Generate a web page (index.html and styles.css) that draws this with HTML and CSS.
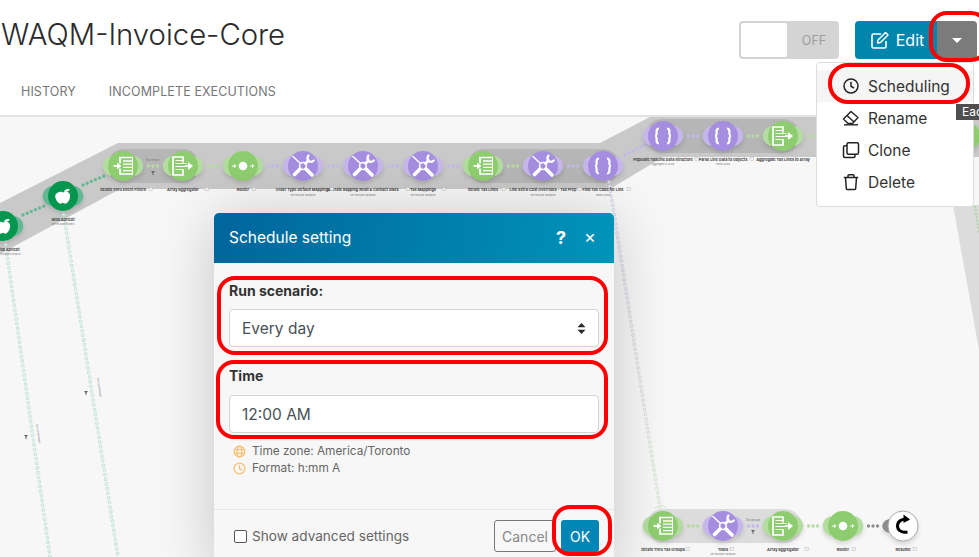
FILE: index.html
```html
<!DOCTYPE html>
<html lang="en">
<head>
<meta charset="utf-8">
<title>WAQM-Invoice-Core</title>
<link rel="stylesheet" href="styles.css">
</head>
<body>
<svg class="defs" width="0" height="0" aria-hidden="true">
  <defs>
    <linearGradient id="chain-fade" gradientUnits="userSpaceOnUse" x1="609" y1="182" x2="660" y2="508">
      <stop offset="0" stop-color="#d6d4ea"/>
      <stop offset="0.6" stop-color="#d9dcdc"/>
      <stop offset="1" stop-color="#d6e8d2"/>
    </linearGradient>
    <symbol id="h" viewBox="-25 -25 50 50">
      <path d="M12 -10 C23 -6.500 23 6.500 12 10 Z M-12 -10 C-23 -6.500 -23 6.500 -12 10 Z"/>
    </symbol>
    <symbol id="i-tools" viewBox="-15 -15 30 30">
      <g fill="none" stroke="#fff" stroke-linecap="round">
        <path d="M-10 -9.500 L-3 -3" stroke-width="1.500"/>
        <path d="M3 3 L9 9" stroke-width="3.800"/>
        <path d="M-8.500 8.500 L-3 3" stroke-width="3.800"/>
        <path d="M2.500 -2.500 L5.500 -5.500" stroke-width="2.800"/>
        <path d="M5.500 -10.500 A4.400 4.400 0 0 0 5.500 -5 A4.400 4.400 0 0 0 10.800 -5.500" stroke-width="2.200"/>
        <circle r="3.400" stroke-width="1.500"/>
      </g>
    </symbol>
    <symbol id="i-iter" viewBox="-15 -15 30 30">
      <g fill="none" stroke="#fff">
        <path d="M-3 -2.500 V-8.500 H10 M10 8 H-3 V2.500" stroke-width="1.700"/>
        <path d="M0 -5 H10 M0 -1.800 H10 M0 1.400 H10 M0 4.600 H10" stroke-width="1.300"/>
        <path d="M9.500 -8.500 V8" stroke-width="0.900"/>
        <path d="M-9.500 0 H-5" stroke-width="1.800"/>
      </g>
      <path d="M-6 -3.200 L-1.500 0 L-6 3.200 Z" fill="#fff"/>
    </symbol>
    <symbol id="i-aggr" viewBox="-15 -15 30 30">
      <g fill="none" stroke="#fff">
        <path d="M0 -3.500 V-9 H-10 V9 H0 V3.500" stroke-width="1.700"/>
        <path d="M-7.500 -5.500 H1 M-7.500 -2.500 H3.500 M-7.500 0.500 H3.500 M-7.500 3.500 H1" stroke-width="1.200"/>
        <path d="M2 0 H6" stroke-width="1.600"/>
      </g>
      <path d="M5 -4 L10 0 L5 4 Z" fill="#fff"/>
    </symbol>
    <symbol id="i-router" viewBox="-15 -15 30 30">
      <circle r="4.300" fill="#fff"/>
      <path d="M-11 0 H-8.500 M7 0 H9.500" stroke="#fff" stroke-width="1.200"/>
      <path d="M-9 -2 L-6.500 0 L-9 2 Z M9 -2 L11.500 0 L9 2 Z" fill="#fff"/>
    </symbol>
    <symbol id="i-json" viewBox="-15 -15 30 30">
      <path d="M-4 -7.500 C-7.500 -7.500 -6 -3 -6.500 -1.500 C-6.800 -0.600 -7.500 0 -8 0 C-7.500 0 -6.800 0.600 -6.500 1.500 C-6 3 -7.500 7.500 -4 7.500 M4 -7.500 C7.500 -7.500 6 -3 6.500 -1.500 C6.800 -0.600 7.500 0 8 0 C7.500 0 6.800 0.600 6.500 1.500 C6 3 7.500 7.500 4 7.500" fill="none" stroke="#fff" stroke-width="2.200"/>
    </symbol>
    <symbol id="i-apple" viewBox="-15 -15 30 30">
      <g transform="scale(.85) translate(0 1)">
        <path d="M-6 -5 C-3 -7 -1 -5.500 0 -5 C2 -6 6 -7 8 -3 C9.500 1 6 8 3 8 C1.500 8 1 7 0 7 C-1 7 -2 8 -3 8 C-6 8 -10 1 -9 -2 C-8.600 -3.600 -7 -4.500 -6 -5 Z" fill="#fff"/>
        <path d="M1 -6 C2 -9 5 -10 8 -9 C7 -6.500 4 -5.500 1 -6 Z" fill="#fff"/>
      </g>
    </symbol>
  </defs>
</svg>

<header class="top">
  <div class="top-row">
    <h1 class="title">WAQM-Invoice-Core</h1>
    <div class="actions">
      <div class="toggle"><span class="toggle-knob"></span><span class="toggle-off">OFF</span></div>
      <div class="btn-group">
        <button class="btn-edit" type="button">
          <svg class="edit-icon" viewBox="0 0 20 20" width="20" height="20"><path d="M16 11 V16.500 A1.500 1.500 0 0 1 14.500 18 H3.500 A1.500 1.500 0 0 1 2 16.500 V5.500 A1.500 1.500 0 0 1 3.500 4 H11" fill="none" stroke="#fff" stroke-width="1.600"/><path d="M8 10 L15.500 2.500 L18 5 L10.500 12.500 L7.500 13 Z" fill="none" stroke="#fff" stroke-width="1.500" stroke-linejoin="round"/></svg>
          <span>Edit</span>
        </button>
        <button class="btn-caret" type="button" aria-label="More"><span class="caret"></span></button>
      </div>
    </div>
  </div>
  <nav class="tabs">
    <a class="tab">HISTORY</a>
    <a class="tab">INCOMPLETE EXECUTIONS</a>
  </nav>
</header>

<main class="canvas">
  <svg class="diagram" width="979" height="440" viewBox="0 117 979 440">
    <!-- bands -->
    <path class="band" d="M0 203 L118 143 H600 L650 117 H979 V157 H663 L610 189 H120 L0 254 Z"/>
    <path class="band-fade" d="M953 205 H979 V350 Z"/>
    <rect class="group" x="107" y="149" width="93" height="34" rx="17"/>
    <rect class="group" x="467" y="149" width="153" height="34" rx="17"/>
    <rect class="group" x="645" y="119" width="155" height="34" rx="17"/>
    <rect class="group-light" x="646" y="509" width="156" height="34" rx="17"/>

    <!-- long links -->
    <g class="chain-g">
      <path class="ring-o" d="M5 240 L50 557"/><path class="ring-i" d="M5 240 L50 557"/>
      <path class="ring-o" d="M63 210 L118 557"/><path class="ring-i" d="M63 210 L118 557"/>
      <path class="ring-arc" d="M57 213 A7 7 0 0 0 69 213"/>
    </g>
    <g class="chain-p">
      <path class="ring-o" d="M609 182 L660 508"/><path class="ring-i" d="M609 182 L660 508"/>
      <path class="ring-arc" d="M655 509 A7 7 0 0 1 667 509"/>
    </g>
    <path class="chain-side" d="M975 207 L979 232"/>
    <g class="mini">
      <text transform="translate(36 424) rotate(82)">Not scheduled</text>
      <text transform="translate(97 378) rotate(82)">Not scheduled</text>
      <path d="M24 435 h4 l-1.500 2 v2 h-1 v-2 Z M84 391 h4 l-1.500 2 v2 h-1 v-2 Z M151 171 h4 l-1.500 2 v2 h-1 v-2 Z M751 530 h4 l-1.500 2 v2 h-1 v-2 Z"/>
      <text x="153" y="161" class="mini-c">Not empty</text>
      <text x="753" y="521" class="mini-c">Tax groups</text>
    </g>

    <!-- short links -->
    <g class="dots dots-dg"><path d="M23 215 L44 206"/><path d="M83 185 L104 176"/></g>
    <g class="dots dots-g">
      <path d="M148.500 166 H158"/><path d="M208.500 166 H218"/><path d="M508.500 166 H518"/><path d="M748.500 136 H758"/>
      <path d="M808.500 136 H818"/><path d="M688.500 526 H698"/><path d="M808.500 526 H818"/><path d="M868.500 526 H878" class="dots-grey"/>
    </g>
    <g class="dots dots-p">
      <path d="M268.500 166 H278"/><path d="M328.500 166 H338"/><path d="M388.500 166 H398"/><path d="M448.500 166 H458"/>
      <path d="M568.500 166 H578"/><path d="M625 155 L646 144"/><path d="M688.500 136 H698"/><path d="M748.500 526 H758"/>
    </g>

    <!-- nodes -->
    <g class="n"><use href="#h" class="halo-dg" x="-22" y="201" width="50" height="50"/><circle class="fill-dg" cx="3" cy="226" r="15"/><use href="#i-apple" x="-12" y="211" width="30" height="30"/></g>
    <g class="n"><use href="#h" class="halo-dg" x="38" y="171" width="50" height="50"/><circle class="fill-dg" cx="63" cy="196" r="15"/><use href="#i-apple" x="48" y="181" width="30" height="30"/></g>

    <g class="n"><use href="#h" class="halo-g" x="98" y="141" width="50" height="50"/><circle class="fill-g" cx="123" cy="166" r="15"/><use href="#i-iter" x="108" y="151" width="30" height="30"/></g>
    <g class="n"><use href="#h" class="halo-g" x="158" y="141" width="50" height="50"/><circle class="fill-g" cx="183" cy="166" r="15"/><use href="#i-aggr" x="168" y="151" width="30" height="30"/></g>
    <g class="n"><use href="#h" class="halo-g" x="218" y="141" width="50" height="50"/><circle class="fill-g" cx="243" cy="166" r="15"/><use href="#i-router" x="228" y="151" width="30" height="30"/></g>
    <g class="n"><use href="#h" class="halo-p" x="278" y="141" width="50" height="50"/><circle class="fill-p" cx="303" cy="166" r="15"/><use href="#i-tools" x="288" y="151" width="30" height="30"/></g>
    <g class="n"><use href="#h" class="halo-p" x="338" y="141" width="50" height="50"/><circle class="fill-p" cx="363" cy="166" r="15"/><use href="#i-tools" x="348" y="151" width="30" height="30"/></g>
    <g class="n"><use href="#h" class="halo-p" x="398" y="141" width="50" height="50"/><circle class="fill-p" cx="423" cy="166" r="15"/><use href="#i-tools" x="408" y="151" width="30" height="30"/></g>
    <g class="n"><use href="#h" class="halo-g" x="458" y="141" width="50" height="50"/><circle class="fill-g" cx="483" cy="166" r="15"/><use href="#i-iter" x="468" y="151" width="30" height="30"/></g>
    <g class="n"><use href="#h" class="halo-p" x="518" y="141" width="50" height="50"/><circle class="fill-p" cx="543" cy="166" r="15"/><use href="#i-tools" x="528" y="151" width="30" height="30"/></g>
    <g class="n"><use href="#h" class="halo-p" x="578" y="141" width="50" height="50"/><circle class="fill-p" cx="603" cy="166" r="15"/><use href="#i-json" x="588" y="151" width="30" height="30"/></g>
    <g class="n"><use href="#h" class="halo-p" x="638" y="111" width="50" height="50"/><circle class="fill-p" cx="663" cy="136" r="15"/><use href="#i-json" x="648" y="121" width="30" height="30"/></g>
    <g class="n"><use href="#h" class="halo-p" x="698" y="111" width="50" height="50"/><circle class="fill-p" cx="723" cy="136" r="15"/><use href="#i-json" x="708" y="121" width="30" height="30"/></g>
    <g class="n"><use href="#h" class="halo-g" x="758" y="111" width="50" height="50"/><circle class="fill-g" cx="783" cy="136" r="15"/><use href="#i-aggr" x="768" y="121" width="30" height="30"/></g>
    <g class="n"><circle class="fill-g" cx="965" cy="136" r="15"/></g>

    <g class="n"><use href="#h" class="halo-g" x="638" y="501" width="50" height="50"/><circle class="fill-g" cx="663" cy="526" r="15"/><use href="#i-iter" x="648" y="511" width="30" height="30"/></g>
    <g class="n"><use href="#h" class="halo-p" x="698" y="501" width="50" height="50"/><circle class="fill-p" cx="723" cy="526" r="15"/><use href="#i-tools" x="708" y="511" width="30" height="30"/></g>
    <g class="n"><use href="#h" class="halo-g" x="758" y="501" width="50" height="50"/><circle class="fill-g" cx="783" cy="526" r="15"/><use href="#i-aggr" x="768" y="511" width="30" height="30"/></g>
    <g class="n"><use href="#h" class="halo-g" x="818" y="501" width="50" height="50"/><circle class="fill-g" cx="843" cy="526" r="15"/><use href="#i-router" x="828" y="511" width="30" height="30"/></g>
    <g class="n">
      <path class="resume-h" d="M889 519 C880 522 880 530 889 533 Z"/>
      <circle class="resume" cx="903" cy="526" r="15"/>
      <path class="resume-c" d="M908 519.500 C901 518 897.500 522 897.500 526 C897.500 530 901 533 907.500 532"/>
      <path d="M903.500 514.500 L910 519.500 L903.500 523 Z"/>
    </g>

    <!-- labels -->
    <g class="lbl">
      <text x="8" y="251">Wild Apricot</text>
      <text x="63" y="221">Wild Apricot</text>
      <text x="123" y="191">Iterate Thru Event Filters</text>
      <text x="183" y="191">Array aggregator</text>
      <text x="243" y="191">Router</text>
      <text x="303" y="191">Order Type Default Mappings</text>
      <text x="363" y="191">Ulterate Bapping Reldt &amp; Contact Sikes</text>
      <text x="423" y="191">Tax Mappings</text>
      <text x="483" y="191">Iterate Tax Lines</text>
      <text x="543" y="191">Line Extra Cost Overrides - Tax Prep</text>
      <text x="603" y="191">Find Tax Code for Line</text>
      <text x="663" y="161">Populate TaxLine Data Structure</text>
      <text x="723" y="161">Parse Line Data to Objects</text>
      <text x="783" y="161">Aggregate Tax Lines to Array</text>
      <text x="663" y="551">Iterate Thru Tax Groups</text>
      <text x="723" y="551">Tools</text>
      <text x="783" y="551">Array aggregator</text>
      <text x="843" y="551">Router</text>
      <text x="903" y="551">Resume</text>
    </g>
    <g class="sub">
      <text x="8" y="255">Get multiple contacts</text>
      <text x="63" y="225">Get multiple folders</text>
      <text x="303" y="196">Set multiple variables</text>
      <text x="363" y="196">Set multiple variables</text>
      <text x="423" y="196">Set multiple variables</text>
      <text x="543" y="196">Set multiple variables</text>
      <text x="603" y="196">Parse JSON</text>
      <text x="663" y="165">Aggregate to JSON</text>
      <text x="723" y="165">Parse JSON</text>
      <text x="723" y="555">Set multiple variables</text>
    </g>
    <g class="lbl-ic">
      <rect x="149" y="187.500" width="3.500" height="3"/><rect x="205" y="187.500" width="3.500" height="3"/><rect x="252" y="187.500" width="3.500" height="3"/>
      <rect x="330" y="187.500" width="3.500" height="3"/><rect x="406" y="187.500" width="3.500" height="3"/><rect x="442" y="187.500" width="3.500" height="3"/>
      <rect x="502" y="187.500" width="3.500" height="3"/><rect x="578" y="187.500" width="3.500" height="3"/><rect x="627" y="187.500" width="3.500" height="3"/>
      <rect x="695" y="157.500" width="3.500" height="3"/><rect x="750" y="157.500" width="3.500" height="3"/><rect x="686" y="547.500" width="3.500" height="3"/>
      <rect x="730" y="547.500" width="3.500" height="3"/><rect x="805" y="547.500" width="3.500" height="3"/><rect x="852" y="547.500" width="3.500" height="3"/><rect x="913" y="547.500" width="3.500" height="3"/>
    </g>
  </svg>

  <section class="modal">
    <div class="modal-head">
      <h2 class="modal-title">Schedule setting</h2>
      <span class="modal-help">?</span>
      <span class="modal-close">×</span>
    </div>
    <div class="modal-body">
      <label class="field-label">Run scenario:</label>
      <div class="field field-select">
        <span>Every day</span>
        <svg width="9" height="11" viewBox="0 0 9 11"><path d="M4.500 0 L8.500 4.200 H0.500 Z M4.500 11 L0.500 6.800 H8.500 Z" fill="#2b2b2b"/></svg>
      </div>
      <label class="field-label field-label-time">Time</label>
      <div class="field">12:00 AM</div>
      <ul class="hints">
        <li class="hint">
          <svg width="13" height="13" viewBox="0 0 13 13"><g fill="none" stroke="#f9c074" stroke-width="1.200"><circle cx="6.500" cy="6.500" r="5.400"/><ellipse cx="6.500" cy="6.500" rx="2.400" ry="5.400"/><path d="M1.100 4.600 H11.900 M1.100 8.400 H11.900"/></g></svg>
          Time zone: America/Toronto
        </li>
        <li class="hint">
          <svg width="13" height="13" viewBox="0 0 13 13"><g fill="none" stroke="#f9c074" stroke-width="1.300"><circle cx="6.500" cy="6.500" r="5.400"/><path d="M6.500 3 V6.800 L9 8.200"/></g></svg>
          Format: h:mm A
        </li>
      </ul>
    </div>
    <div class="modal-foot">
      <label class="check"><span class="check-box"></span>Show advanced settings</label>
      <button class="btn-cancel" type="button">Cancel</button>
      <button class="btn-ok" type="button">OK</button>
    </div>
  </section>
</main>

<div class="menu">
  <div class="menu-item menu-item-active">
    <svg width="18" height="18" viewBox="0 0 18 18"><g fill="none" stroke="#222" stroke-width="1.500"><circle cx="9" cy="9" r="7"/><path d="M9 4.800 V9.300 L12 11"/></g></svg>
    Scheduling
  </div>
  <div class="menu-item">
    <svg width="18" height="18" viewBox="0 0 18 18"><g fill="none" stroke="#222" stroke-width="1.400" stroke-linejoin="round"><path d="M1.500 10 L9 2.500 L16 8.500 L10.500 14.500 H6 Z"/><path d="M5 6.500 L12 13"/><path d="M2 15.800 H16"/></g></svg>
    Rename
  </div>
  <div class="menu-item">
    <svg width="18" height="18" viewBox="0 0 18 18"><g fill="none" stroke="#222" stroke-width="1.500"><rect x="5" y="1.800" width="11.500" height="11.500" rx="1.500"/><path d="M5 4.800 H3 A1.500 1.500 0 0 0 1.500 6.300 V15 A1.500 1.500 0 0 0 3 16.500 H11.500 A1.500 1.500 0 0 0 13 15 V13.300"/></g></svg>
    Clone
  </div>
  <div class="menu-item">
    <svg width="18" height="18" viewBox="0 0 18 18"><g fill="none" stroke="#222" stroke-width="1.500"><path d="M1.800 4.500 H16.200"/><path d="M6 4.500 V2.800 A1 1 0 0 1 7 1.800 H11 A1 1 0 0 1 12 2.800 V4.500"/><path d="M3.500 4.500 L4.300 15.500 A1 1 0 0 0 5.300 16.500 H12.700 A1 1 0 0 0 13.700 15.500 L14.500 4.500"/></g></svg>
    Delete
  </div>
</div>
<div class="tip">Each</div>

<span class="mark mark-caret"></span>
<span class="mark mark-sched"></span>
<span class="mark mark-run"></span>
<span class="mark mark-time"></span>
<span class="mark mark-ok"></span>
</body>
</html>
```
FILE: styles.css
```css
* { box-sizing: border-box; }
html, body { margin: 0; height: 557px; overflow: hidden; }
body {
  width: 979px;
  position: relative;
  display: flex;
  flex-direction: column;
  background: #fff;
  font-family: Inter, "Liberation Sans", sans-serif;
  color: #333;
}
.defs { position: absolute; }

/* header */
.top { height: 117px; flex: none; border-bottom: 2px solid #e3e3e3; background: #fff; }
.top-row { display: flex; justify-content: space-between; align-items: flex-start; padding: 21px 2px 0 2px; height: 84px; }
.title { margin: -4px 0 0 -1px; font-size: 29.300px; line-height: 36px; font-weight: 300; color: #2b2b2b; }
.actions { display: flex; gap: 16px; }
.toggle { width: 100px; height: 38px; display: flex; align-items: center; background: #d4d4d4; border-radius: 4px; padding: 2px; }
.toggle-knob { width: 46px; height: 34px; background: #fff; border-radius: 2px; }
.toggle-off { flex: 1; text-align: center; font-size: 12.500px; color: #9c9c9c; padding-left: 4px; }
.btn-group { display: flex; height: 38px; }
.btn-edit { width: 82px; border: 0; border-radius: 4px 0 0 4px; background: #0085ad; color: #fff; font: 400 16px Inter, sans-serif; display: flex; align-items: center; justify-content: center; gap: 6px; padding: 0 0 0 2px; }
.btn-caret { width: 40px; border: 0; border-radius: 0 4px 4px 0; background: #7b7b7b; display: flex; align-items: center; justify-content: center; padding: 0; }
.caret { width: 0; height: 0; border-left: 5px solid transparent; border-right: 5px solid transparent; border-top: 5px solid #fff; }
.tabs { display: flex; gap: 33px; padding-left: 21px; }
.tab { font-size: 12.500px; line-height: 16px; color: #777; letter-spacing: .1px; }

/* canvas */
.canvas { position: relative; flex: 1; background: #f7f7f7; overflow: hidden; }
.diagram { display: block; position: absolute; left: 0; top: 0; }
.band { fill: #c9c9c9; }
.band-fade { fill: #dcdcdc; }
.group { fill: #b6b6b6; }
.group-light { fill: #dcdcdc; }
.ring-o, .ring-i { fill: none; stroke-linecap: round; stroke-dasharray: 0 4.700; }
.ring-o { stroke-width: 3.800; }
.ring-i { stroke-width: 1.700; stroke: #f7f7f7; }
.chain-g .ring-o { stroke: #c3e4d6; }
.chain-p .ring-o { stroke: url(#chain-fade); }
.ring-arc { fill: none; stroke-width: 1; }
.chain-g .ring-arc { stroke: #b9ddcc; }
.chain-p .ring-arc { stroke: #cfe6c8; }
.chain-side { fill: none; stroke: #b7d4b0; stroke-width: 2.500; stroke-linecap: round; stroke-dasharray: 0 3.500; }
.mini text { font: 400 2.800px Inter, sans-serif; fill: #777; }
.mini .mini-c { text-anchor: middle; }
.mini path { fill: #666; }
.dots path { fill: none; stroke-linecap: round; stroke-width: 3.300; stroke-dasharray: 0 4.500; }
.dots-dg path { stroke: #63b893; }
.dots-g path { stroke: #b4dca0; }
.dots-p path { stroke: #c5b7ea; }
.dots .dots-grey { stroke: #8c8c8c; }
.n { filter: drop-shadow(0 3px 2px rgba(0,0,0,.13)); }
.fill-g { fill: #8ecd6f; }
.fill-p { fill: #a58de0; }
.fill-dg { fill: #04964f; }
.halo-g { fill: #b4dca0; }
.halo-p { fill: #c5b7ea; }
.halo-dg { fill: #63b893; }
.resume { fill: #fff; stroke: #aaa; stroke-width: 1; }
.resume-h { fill: #8c8c8c; }
.resume-c { fill: none; stroke: #000; stroke-width: 3; }
.lbl text { font: 700 3.800px Inter, sans-serif; fill: #444; text-anchor: middle; }
.sub text { font: 400 2.500px Inter, sans-serif; fill: #777; text-anchor: middle; }
.lbl-ic rect { fill: #f2f2f2; stroke: #bbb; stroke-width: .5; }

/* modal */
.modal {
  position: absolute; left: 214px; top: 96px; width: 400px; height: 360px;
  border-radius: 5px 5px 0 0; background: #f7f7f7;
  box-shadow: 0 4px 60px rgba(0,0,0,.2);
  display: flex; flex-direction: column;
}
.modal-head {
  height: 50px; flex: none; display: flex; align-items: center; padding: 0 18px 2px 15px;
  border-radius: 5px 5px 0 0; color: #fff;
  background: linear-gradient(100deg, #00659c 0%, #0085b0 70%, #0094ba 100%);
}
.modal-title { margin: 0; flex: 1; font-size: 15.500px; font-weight: 400; }
.modal-help { font-size: 18px; font-weight: 700; width: 28px; }
.modal-close { font-size: 18px; line-height: 18px; }
.modal-body { flex: none; height: 246px; padding: 19px 15px 0; }
.field-label { display: block; font-size: 14px; line-height: 18px; font-weight: 700; color: #333; margin-bottom: 9px; }
.field-label-time { margin-top: 20px; margin-bottom: 10px; }
.field {
  height: 38px; width: 370px; background: #fff; border: 1px solid #d4d4d4; border-radius: 4px;
  display: flex; align-items: center; justify-content: space-between; padding: 0 12px;
  font-size: 15.500px; color: #495057;
}
.hints { list-style: none; margin: 10px 0 0; padding: 0 0 0 4px; }
.hint { display: flex; align-items: center; gap: 6px; font-size: 11.800px; line-height: 17px; color: #666; }
.modal-foot {
  flex: none; height: 64px; border-top: 1px solid #e6e6e6; display: flex; align-items: flex-start;
  padding: 10px 15px 0 20px;
}
.check { flex: 1; display: flex; align-items: center; gap: 5px; font-size: 13.600px; line-height: 32px; color: #666; }
.check-box { width: 13px; height: 13px; background: #fff; border: 1px solid #555; border-radius: 2px; }
.btn-cancel { width: 62px; height: 32px; padding: 0; background: transparent; border: 1px solid #777; border-radius: 3px; color: #888; font: 400 14px Inter, sans-serif; margin-right: 5px; }
.btn-ok { width: 38px; height: 32px; padding: 0; background: #0086b4; border: 0; border-radius: 3px; color: #fff; font: 400 14px Inter, sans-serif; }

/* dropdown */
.menu {
  position: absolute; left: 816px; top: 62px; width: 158px; height: 145px; padding: 7px 0;
  background: #fff; border: 1px solid #ddd; border-radius: 4px;
  display: flex; flex-direction: column;
}
.menu-item { height: 32px; display: flex; align-items: center; gap: 8px; padding-left: 25px; font-size: 15.500px; color: #333; flex: none; }
.menu-item-active { background: #f5f5f5; }
.tip { position: absolute; left: 956px; top: 104px; width: 23px; height: 16px; overflow: hidden; background: #4e4e4e; color: #fff; font-size: 12px; line-height: 16px; padding-left: 6px; white-space: nowrap; }

/* red annotations */
.mark { position: absolute; border: 4px solid #f00; }
.mark-caret { left: 929px; top: 11px; width: 60px; height: 51px; border-radius: 18px; }
.mark-sched { left: 828px; top: 63px; width: 142px; height: 41px; border-radius: 20px; }
.mark-run { left: 217px; top: 276px; width: 391px; height: 79px; border-radius: 18px; }
.mark-time { left: 216px; top: 360px; width: 392px; height: 79px; border-radius: 18px; }
.mark-ok { left: 552px; top: 505px; width: 60px; height: 51px; border-radius: 18px; }
```
